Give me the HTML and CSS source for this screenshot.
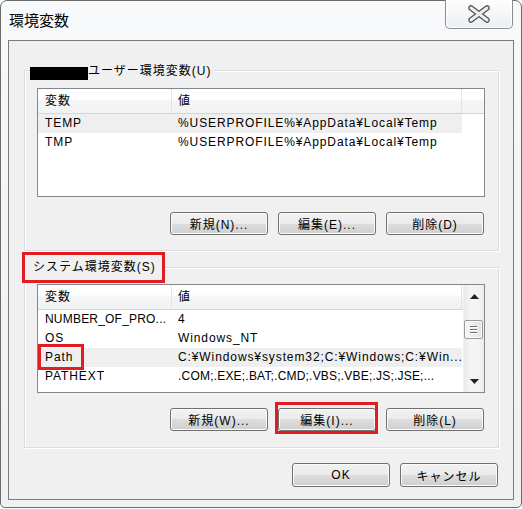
FILE: index.html
```html
<!DOCTYPE html>
<html lang="ja">
<head>
<meta charset="utf-8">
<title>環境変数</title>
<link rel="stylesheet" href="styles.css">
</head>
<body>
<div class="window">
  <div class="titlebar">
    <div class="title">環境変数</div>
    <div class="close">
      <svg width="24" height="18" viewBox="0 0 24 18">
        <path d="M4 3 L20 15 M20 3 L4 15" stroke="#4f5358" stroke-width="5.5" stroke-linecap="round" fill="none"/>
        <path d="M4 3 L20 15 M20 3 L4 15" stroke="#eceef0" stroke-width="3" stroke-linecap="round" fill="none"/>
      </svg>
    </div>
  </div>
  <div class="client">
    <div class="group group-user">
      <div class="legend"><span class="redact"></span><span>ユーザー環境変数(U)</span></div>
      <div class="list">
        <div class="lbody">
          <div class="lhead"><div class="c1">変数</div><div class="c2">値</div><div class="c3"></div></div>
          <div class="row sel"><div class="c1">TEMP</div><div class="c2">%USERPROFILE%¥AppData¥Local¥Temp</div></div>
          <div class="row"><div class="c1">TMP</div><div class="c2">%USERPROFILE%¥AppData¥Local¥Temp</div></div>
        </div>
      </div>
      <div class="btns">
        <div class="btn">新規(N)...</div>
        <div class="btn">編集(E)...</div>
        <div class="btn">削除(D)</div>
      </div>
    </div>
    <div class="group group-sys">
      <div class="legend legend-marked"><span>システム環境変数(S)</span></div>
      <div class="list">
        <div class="lbody">
          <div class="lhead"><div class="c1">変数</div><div class="c2">値</div></div>
          <div class="row"><div class="c1 tight">NUMBER_OF_PRO...</div><div class="c2">4</div></div>
          <div class="row"><div class="c1">OS</div><div class="c2">Windows_NT</div></div>
          <div class="row sel path"><div class="c1">Path</div><div class="c2">C:¥Windows¥system32;C:¥Windows;C:¥Win...</div><span class="mark"></span></div>
          <div class="row"><div class="c1">PATHEXT</div><div class="c2 tight">.COM;.EXE;.BAT;.CMD;.VBS;.VBE;.JS;.JSE;...</div></div>
          <div class="row"><div class="c1"></div><div class="c2"></div></div>
        </div>
        <div class="sb">
          <div class="sb-btn"><svg width="9" height="5" viewBox="0 0 9 5"><path d="M0 5 L4.5 0 L9 5 Z" fill="#222"/></svg></div>
          <div class="sb-track"><div class="thumb"><i></i><i></i><i></i></div></div>
          <div class="sb-btn"><svg width="9" height="5" viewBox="0 0 9 5"><path d="M0 0 L9 0 L4.5 5 Z" fill="#222"/></svg></div>
        </div>
      </div>
      <div class="btns">
        <div class="btn">新規(W)...</div>
        <div class="btn btn-marked">編集(I)...</div>
        <div class="btn">削除(L)</div>
      </div>
    </div>
    <div class="footer">
      <div class="btn btn-lg">OK</div>
      <div class="btn btn-lg">キャンセル</div>
    </div>
  </div>
</div>
</body>
</html>
```
FILE: styles.css
```css
* { box-sizing: border-box; }
body {
  margin: 0;
  width: 522px;
  height: 509px;
  overflow: hidden;
  background: #ffffff;
  font-family: "Liberation Sans", "Noto Sans CJK JP", sans-serif;
  font-size: 12px;
  color: #000;
}
.window {
  width: 522px;
  height: 508px;
  border: 1px solid #6b6b6b;
  border-radius: 7px 7px 5px 5px;
  background: linear-gradient(#f8f9fa, #eef0f2);
  display: flex;
  flex-direction: column;
}
.titlebar {
  height: 39px;
  flex: none;
  display: flex;
  justify-content: space-between;
  align-items: flex-start;
}
.title {
  margin: 9px 0 0 8px;
  font-family: "Noto Sans CJK JP", sans-serif;
  font-size: 15px;
  line-height: 20px;
}
.close {
  width: 68px;
  height: 29px;
  margin: -1px 8px 0 0;
  border: 1px solid #8a8c90;
  border-top: none;
  border-radius: 0 0 5px 5px;
  background: linear-gradient(#fdfdfd, #eceef0);
  box-shadow: inset 0 0 0 1px #ffffff;
  display: flex;
  align-items: center;
  justify-content: center;
}
.client {
  flex: 1;
  margin: 0 7px 7px 7px;
  border: 1px solid #7b7b7b;
  background: #f0f0f0;
  padding: 29px 14px 0 15px;
}
.group {
  border: 1px solid #d5dfe5;
  box-shadow: inset 1px 1px 0 #ffffff, 1px 1px 0 #ffffff;
  padding: 0 13px 15px 12px;
}
.group-sys {
  margin-top: 16px;
  padding-bottom: 16px;
}
.legend {
  display: flex;
  align-items: flex-start;
  width: fit-content;
  height: 17px;
  margin: -8px 0 0 -7px;
  padding-right: 3px;
  background: #f0f0f0;
  line-height: 17px;
  letter-spacing: 1px;
  white-space: nowrap;
}
.redact {
  display: block;
  width: 58px;
  height: 13px;
  margin-top: 4px;
  background: #000;
}
.legend-marked {
  height: 31px;
  margin: -16px 0 0 -15px;
  padding: 0 6px 0 8px;
  border: 3px solid #e31b23;
  align-items: center;
}
.list {
  margin-top: 8px;
  height: 109px;
  border: 1px solid #828790;
  background: #ffffff;
  overflow: hidden;
  display: flex;
}
.group-sys .list { margin-top: 1px; }
.lbody {
  flex: 1;
  min-width: 0;
}
.lhead {
  display: flex;
  height: 25px;
  line-height: 24px;
  background: linear-gradient(#ffffff 0, #ffffff 40%, #f4f5f6 50%, #f1f2f3 100%);
  border-bottom: 1px solid #d5d5d5;
  letter-spacing: 1px;
}
.lhead .c1, .lhead .c2 { border-right: 1px solid #e3e4e6; }
.c1 {
  width: 134px;
  flex: none;
  padding-left: 7px;
  overflow: hidden;
  white-space: nowrap;
}
.c2 {
  width: 290px;
  flex: none;
  padding-left: 6px;
  overflow: hidden;
  white-space: nowrap;
}
.c3 { flex: 1; }
.row {
  display: flex;
  height: 19px;
  line-height: 19px;
  letter-spacing: 0.9px;
  position: relative;
}
.row .tight { letter-spacing: 0.2px; }
.row.sel .c1, .row.sel .c2 { background: #efefef; }
.mark {
  position: absolute;
  left: 0;
  top: -4px;
  width: 46px;
  height: 26px;
  border: 3px solid #e31b23;
}
.sb {
  width: 21px;
  flex: none;
  display: flex;
  flex-direction: column;
  background: linear-gradient(90deg, #e9e9e9, #f4f4f4 30%, #f4f4f4 70%, #ececec);
  border-left: 1px solid #f0f0f0;
}
.sb-btn {
  height: 22px;
  display: flex;
  align-items: center;
  justify-content: center;
  flex: none;
}
.sb-track { flex: 1; }
.thumb {
  width: 19px;
  height: 19px;
  margin-top: 13px;
  border: 1px solid #9a9a9a;
  border-radius: 2px;
  background: linear-gradient(90deg, #f6f6f6, #e4e4e4);
  box-shadow: inset 0 0 0 1px #fafafa;
  display: flex;
  flex-direction: column;
  align-items: center;
  justify-content: center;
  gap: 2px;
}
.thumb i {
  display: block;
  width: 7px;
  height: 1px;
  background: #6f6f6f;
  box-shadow: 0 1px 0 #ffffff;
}
.btns {
  display: flex;
  justify-content: flex-end;
  gap: 10px;
  margin: 15px 1px 0 0;
}
.btn {
  width: 98px;
  height: 23px;
  border: 1px solid #707070;
  border-radius: 3px;
  background: linear-gradient(#f2f2f2 0, #ebebeb 50%, #dddddd 50%, #cfcfcf 100%);
  box-shadow: inset 0 0 0 1px #fbfbfb;
  display: flex;
  align-items: center;
  justify-content: center;
  letter-spacing: 1px;
  white-space: nowrap;
  position: relative;
}
.btn-marked::after {
  content: "";
  position: absolute;
  left: -4px;
  right: -3px;
  top: -7px;
  bottom: -4px;
  border: 3px solid #e31b23;
}
.footer {
  display: flex;
  justify-content: flex-end;
  gap: 10px;
  margin: 15px 1px 0 0;
}
.btn-lg { height: 24px; }
```
